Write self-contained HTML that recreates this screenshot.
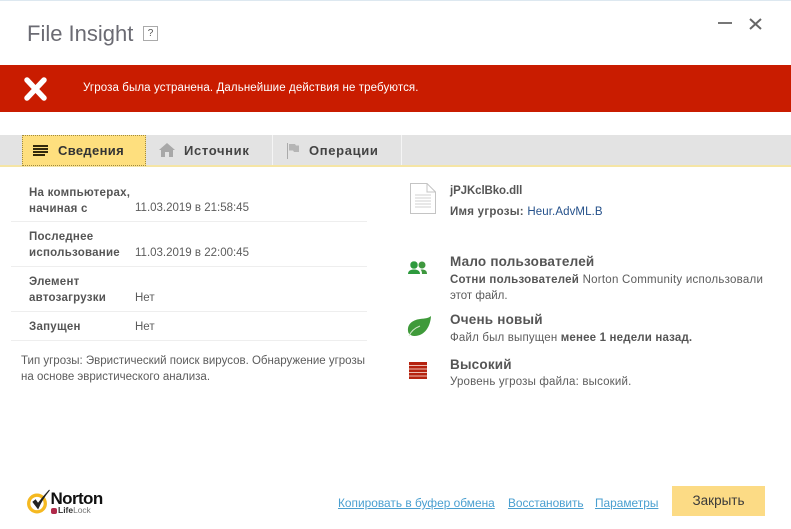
<!DOCTYPE html>
<html><head><meta charset="utf-8">
<style>
html,body{margin:0;padding:0;background:#fff}
#p{position:relative;width:791px;height:529px;overflow:hidden;background:#fff;font-family:"Liberation Sans","DejaVu Sans",sans-serif;font-size:11.5px;color:#5c5c5c}
.t{position:absolute;white-space:nowrap;line-height:15px}
.b,b{font-weight:bold;color:#555;letter-spacing:.25px}
.h{font-weight:bold;font-size:13.5px;color:#555;line-height:16px;letter-spacing:.2px}
.l{position:absolute;height:1px;background:#eee;left:11px;width:356px}
.a{color:#4a9fd0;text-decoration:underline;font-size:11.9px}
.tb{font-weight:bold;font-size:13px;letter-spacing:.65px}
svg{position:absolute;overflow:visible}
</style></head><body><div id="p">
<div style="position:absolute;left:0;top:0;width:791px;height:1px;background:#dde8f0"></div>
<div class="t" style="left:27px;top:20px;font-size:22px;line-height:28px;color:#6b6b73">File Insight</div>
<div class="t" style="left:143px;top:26px;width:13px;height:13px;border:1px solid #aaa;text-align:center;font-size:10px;line-height:13px;color:#555">?</div>
<svg style="left:718px;top:22px" width="50" height="14"><path d="M0 1H14" stroke="#777" stroke-width="2"/><path d="M32 -3L43 7M43 -3L32 7" stroke="#666" stroke-width="2"/></svg>

<div style="position:absolute;left:0;top:65px;width:791px;height:47px;background:#c91c00"></div>
<svg style="left:24px;top:77px" width="24" height="24"><path d="M3 3L20 21M20 3L3 21" stroke="#fff" stroke-width="5.5" stroke-linecap="round"/></svg>
<div class="t" style="left:83px;top:81px;color:#fff;font-size:11.5px;letter-spacing:.11px">Угроза была устранена. Дальнейшие действия не требуются.</div>

<div style="position:absolute;left:0;top:135px;width:791px;height:30px;background:#e3e3e3"></div>
<div style="position:absolute;left:0;top:165px;width:791px;height:2px;background:#f5e5a5"></div>
<div style="position:absolute;left:22px;top:135px;width:122px;height:29px;background:#fedf7e;border:1px dotted #a08a40"></div>
<div style="position:absolute;left:272px;top:135px;width:1px;height:30px;background:#f5f5f5"></div>
<div style="position:absolute;left:401px;top:135px;width:1px;height:30px;background:#f5f5f5"></div>
<svg style="left:33px;top:145px" width="16" height="11"><path d="M0 1H15M0 4H15M0 7H15M0 10H12" stroke="#33290c" stroke-width="2"/></svg>
<div class="t tb" style="left:58px;top:143px;color:#333;letter-spacing:.33px">Сведения</div>
<svg style="left:159px;top:143px" width="16" height="14"><path d="M8 0L16 7H14V14H10V9H6V14H2V7H0Z" fill="#a8a8a8"/></svg>
<div class="t tb" style="left:184px;top:143px;color:#444">Источник</div>
<svg style="left:287px;top:143px" width="14" height="16"><path d="M0.500 0V16" stroke="#aaa" stroke-width="1"/><path d="M2 1H8L9 2.500H12V9H7L6 7.500H2Z" fill="#b5b5b5"/></svg>
<div class="t tb" style="left:309px;top:143px;color:#444">Операции</div>

<div class="t b" style="left:29px;top:185px;line-height:16px">На компьютерах,<br>начиная с</div>
<div class="t" style="left:135px;top:201px">11.03.2019 в 21:58:45</div>
<div class="l" style="top:221px"></div>
<div class="t b" style="left:29px;top:229px;line-height:16px">Последнее<br>использование</div>
<div class="t" style="left:135px;top:246px">11.03.2019 в 22:00:45</div>
<div class="l" style="top:266px"></div>
<div class="t b" style="left:29px;top:274px;line-height:16px">Элемент<br>автозагрузки</div>
<div class="t" style="left:135px;top:291px">Нет</div>
<div class="l" style="top:311px"></div>
<div class="t b" style="left:29px;top:320px">Запущен</div>
<div class="t" style="left:135px;top:320px">Нет</div>
<div class="l" style="top:340px"></div>
<div class="t" style="left:21px;top:353px;line-height:16px">Тип угрозы: Эвристический поиск вирусов. Обнаружение угрозы<br>на основе эвристического анализа.</div>

<svg style="left:410px;top:183px" width="26" height="31"><path d="M0.500 0.500H17L25.500 9V30.500H0.500Z M17 0.500V9H25.500" fill="#fff" stroke="#c4c4c4"/><path d="M5 12H21M5 15H21M5 18H21M5 21H21M5 24H21" stroke="#d0d0d0"/></svg>
<div class="t b" style="left:450px;top:184px;letter-spacing:-.1px">jPJKclBko.dll</div>
<div class="t b" style="left:450px;top:205px">Имя угрозы: <span style="font-weight:normal;color:#24508a;letter-spacing:.1px">Heur.AdvML.B</span></div>

<svg style="left:408px;top:260px" width="20" height="15"><circle cx="14" cy="5" r="3.500" fill="#3f983f"/><path d="M13.500 9.500C17 9.500 19 10.500 19 14H14C14 12 13.500 10.500 12.500 9.800Z" fill="#3f983f"/><circle cx="6" cy="5" r="4" fill="#2e9a3e" stroke="#fff" stroke-width=".5"/><path d="M0 14C0 10.500 3 9.500 6 9.500C9 9.500 12 10.500 12 14Z" fill="#2e9a3e"/></svg>
<div class="t h" style="left:450px;top:254px">Мало пользователей</div>
<div class="t" style="left:450px;top:273px;letter-spacing:.25px"><b style="letter-spacing:.25px">Сотни пользователей</b> Norton Community использовали</div>
<div class="t" style="left:450px;top:289px">этот файл.</div>

<svg style="left:407px;top:315px" width="24" height="24"><path d="M24 1C23.500 11 18 21 7.500 21C5 21 3 20 1.500 18C-1 10 5 5 13 4C18 3.500 22 3 24 1Z" fill="#3f9a3a"/><path d="M2 21C4 16 8 13 13 11" fill="none" stroke="#cfe6c8" stroke-width="1"/></svg>
<div class="t h" style="left:450px;top:312px">Очень новый</div>
<div class="t" style="left:450px;top:331px;letter-spacing:.17px">Файл был выпущен <b style="letter-spacing:.17px">менее 1 недели назад.</b></div>

<svg style="left:409px;top:362px" width="18" height="17"><rect width="18" height="17" fill="#b5220f"/><path d="M0 3.500H18M0 7H18M0 10.500H18M0 14H18" stroke="#eebdb2" stroke-width="1"/></svg>
<div class="t h" style="left:450px;top:357px">Высокий</div>
<div class="t" style="left:450px;top:375px;letter-spacing:.17px">Уровень угрозы файла: высокий.</div>

<svg style="left:27px;top:489px" width="26" height="28"><circle cx="10" cy="14.500" r="8.300" fill="none" stroke="#f5b921" stroke-width="3.300"/><path d="M6 13L11 19.500Q15 10 22.500 1Q16 8 11 14.500L8.500 11Z" fill="#222" stroke="#222" stroke-width="1"/></svg>
<div class="t" style="left:50.500px;top:489px;font-weight:bold;font-size:17px;line-height:20px;color:#111;letter-spacing:-.6px">Norton</div>
<div style="position:absolute;left:51px;top:508px;width:6px;height:6px;border-radius:2px;background:#b02a4a"></div>
<div class="t" style="left:58px;top:505px;font-size:8.500px;line-height:11px;color:#777;letter-spacing:-.1px"><b style="color:#333;letter-spacing:0">Life</b>Lock</div>

<div class="t a" style="left:338px;top:496px">Копировать в буфер обмена</div>
<div class="t a" style="left:508px;top:496px;letter-spacing:-.05px">Восстановить</div>
<div class="t a" style="left:595px;top:496px">Параметры</div>
<div class="t" style="left:672px;top:486px;width:93px;height:30px;background:#fcdb85;text-align:center;line-height:30px;font-size:13.500px;color:#3a3a3a">Закрыть</div>
</div></body></html>
